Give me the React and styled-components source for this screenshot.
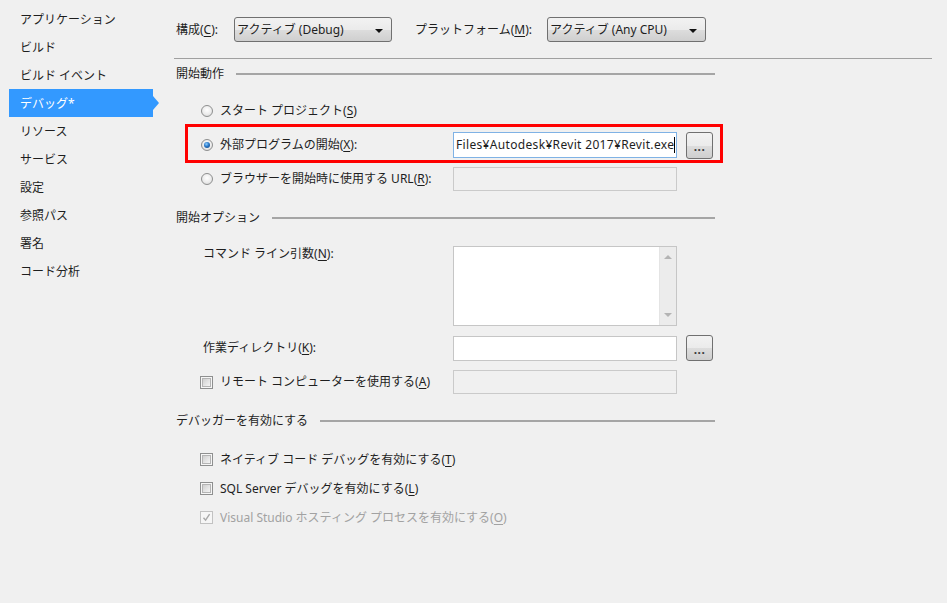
import React from 'react';
import styled, { createGlobalStyle, css } from 'styled-components';

const Global = createGlobalStyle`
  html, body { margin: 0; padding: 0; background: #f0f0f0; }
  body {
    font-family: "Noto Sans", "Noto Sans CJK JP", sans-serif;
    font-size: 12px;
    color: #1e1e1e;
  }
  #root { width: 947px; height: 603px; overflow: hidden; }
  u { text-decoration-thickness: 1px; text-underline-offset: 2px; }
`;

const Page = styled.div`
  display: flex;
  width: 947px;
  height: 603px;
  background: #f0f0f0;
`;

const Sidebar = styled.nav`
  flex: none;
  width: 162px;
  box-sizing: border-box;
  padding: 5px 0 0 9px;
  display: flex;
  flex-direction: column;
`;

const NavItem = styled.div`
  position: relative;
  width: 144px;
  height: 28px;
  box-sizing: border-box;
  padding: 1px 0 0 11px;
  display: flex;
  align-items: center;
  line-height: 16px;
  color: ${p => (p.$active ? '#ffffff' : '#1e1e1e')};
  background: ${p => (p.$active ? '#3399ff' : 'transparent')};
  ${p =>
    p.$active &&
    css`
      &::after {
        content: '';
        position: absolute;
        right: -6px;
        top: 50%;
        transform: translateY(-50%);
        border-left: 6px solid #3399ff;
        border-top: 7px solid transparent;
        border-bottom: 7px solid transparent;
      }
    `}
`;

const Main = styled.main`
  flex: 1;
  box-sizing: border-box;
  padding: 17px 15px 0 14px;
  display: flex;
  flex-direction: column;
`;

const TopRow = styled.div`
  display: flex;
  align-items: center;
  height: 25px;
`;

const FieldLabel = styled.span`
  flex: none;
  width: ${p => p.$w}px;
  line-height: 16px;
  margin-left: ${p => p.$ml || 0}px;
  white-space: nowrap;
`;

const Select = styled.div`
  position: relative;
  flex: none;
  box-sizing: border-box;
  width: ${p => p.$w}px;
  height: 25px;
  border: 1px solid #707070;
  border-radius: 3px;
  background: linear-gradient(#f2f2f2 0%, #ebebeb 50%, #dddddd 51%, #cfcfcf 100%);
  display: flex;
  align-items: center;
  padding-left: 2px;
  line-height: 16px;
  white-space: nowrap;
  &::after {
    content: '';
    position: absolute;
    right: 8px;
    top: 11px;
    border-top: 4px solid #111;
    border-left: 4px solid transparent;
    border-right: 4px solid transparent;
  }
`;

const Divider = styled.div`
  height: 1px;
  margin-top: 16px;
  margin-left: -2px;
  background: #a0a0a0;
`;

const Section = styled.section`
  width: 539px;
  display: flex;
  flex-direction: column;
`;

const SectionHeading = styled.div`
  display: flex;
  align-items: center;
  height: 16px;
  margin-top: ${p => p.$mt}px;
  line-height: 16px;
  &::after {
    content: '';
    flex: 1;
    height: 2px;
    margin-left: 12px;
    background: #a5a5a5;
  }
`;

const FormRow = styled.div`
  position: relative;
  display: grid;
  grid-template-columns: 268px 224px 27px;
  column-gap: 9px;
  align-items: ${p => p.$align || 'center'};
  height: ${p => p.$h}px;
  margin-top: ${p => p.$mt || 0}px;
`;

const RowLabel = styled.label`
  display: flex;
  align-items: center;
  gap: 7px;
  padding-left: ${p => p.$indent}px;
  line-height: 16px;
  white-space: nowrap;
  color: ${p => (p.$disabled ? '#a2a2a2' : '#1e1e1e')};
`;

const Radio = styled.span`
  flex: none;
  width: 12px;
  height: 12px;
  box-sizing: border-box;
  border-radius: 50%;
  border: 1px solid #8e8f8f;
  background: radial-gradient(circle at 50% 40%, #ffffff 0%, #ececec 55%, #cfcfcf 100%);
  display: inline-flex;
  align-items: center;
  justify-content: center;
  &::after {
    content: '';
    display: ${p => (p.$checked ? 'block' : 'none')};
    width: 6px;
    height: 6px;
    border-radius: 50%;
    background: radial-gradient(circle at 40% 35%, #8fd0ff 0%, #2a78c8 45%, #123f75 100%);
  }
`;

const CheckBox = styled.span`
  flex: none;
  width: 13px;
  height: 13px;
  box-sizing: border-box;
  border: 1px solid ${p => (p.$disabled ? '#c2c2c2' : '#8e8f8f')};
  background: #f6f6f6;
  display: inline-flex;
  align-items: center;
  justify-content: center;
  ${p =>
    !p.$disabled &&
    css`
      &::after {
        content: '';
        width: 7px;
        height: 7px;
        border: 1px solid #b4b4b4;
        background: linear-gradient(135deg, #cfcfcf 0%, #e6e6e6 60%, #f4f4f4 100%);
      }
    `}
`;

const TextBox = styled.div`
  box-sizing: border-box;
  height: ${p => p.$h}px;
  border: 1px solid ${p => (p.$focused ? '#7fb2e5' : p.$disabled ? '#cacaca' : '#c6c6c6')};
  background: ${p => (p.$disabled ? '#f0f0f0' : '#ffffff')};
  display: flex;
  align-items: center;
  padding-left: 2px;
  overflow: hidden;
  white-space: nowrap;
  line-height: 16px;
`;

const PathText = styled.span`
  letter-spacing: 0.33px;
`;

const Caret = styled.span`
  flex: none;
  display: inline-block;
  width: 1px;
  height: 16px;
  background: #000;
`;

const TextArea = styled.div`
  box-sizing: border-box;
  height: 80px;
  border: 1px solid #c6c6c6;
  background: #ffffff;
  display: flex;
  justify-content: flex-end;
`;

const ScrollBar = styled.div`
  width: 17px;
  height: 100%;
  box-sizing: border-box;
  border-left: 1px solid #e4e4e4;
  background: #ececec;
  display: flex;
  flex-direction: column;
  justify-content: space-between;
  align-items: center;
  padding: 8px 0;
`;

const ScrollArrow = styled.span`
  width: 0;
  height: 0;
  border-left: 4px solid transparent;
  border-right: 4px solid transparent;
  ${p =>
    p.$up
      ? css`border-bottom: 4px solid #b4b4b4;`
      : css`border-top: 4px solid #b4b4b4;`}
`;

const BrowseButton = styled.button`
  box-sizing: border-box;
  width: 27px;
  height: ${p => p.$h}px;
  padding: 4px 0 0;
  border: 1px solid #707070;
  border-radius: 3px;
  background: linear-gradient(#f2f2f2 0%, #ebebeb 50%, #dddddd 51%, #cfcfcf 100%);
  font-family: "Noto Sans", sans-serif;
  font-size: 12px;
  font-weight: bold;
  color: #3a3a3a;
  letter-spacing: 0.5px;
  line-height: 12px;
`;

const Highlight = styled.div`
  position: absolute;
  top: -4px;
  bottom: -1px;
  left: 9px;
  right: -8px;
  border: 3px solid #ff0000;
  pointer-events: none;
`;

const CheckMark = () => (
  <svg width="9" height="9" viewBox="0 0 9 9">
    <path d="M1.5 4.8 L3.6 7.2 L7.6 1.2" fill="none" stroke="#a8a8a8" strokeWidth="1.4" />
  </svg>
);

const navItems = [
  'アプリケーション',
  'ビルド',
  'ビルド イベント',
  'デバッグ*',
  'リソース',
  'サービス',
  '設定',
  '参照パス',
  '署名',
  'コード分析',
];

export default function App() {
  return (
    <>
      <Global />
      <Page>
        <Sidebar>
          {navItems.map(n => (
            <NavItem key={n} $active={n === 'デバッグ*'}>
              {n}
            </NavItem>
          ))}
        </Sidebar>
        <Main>
          <TopRow>
            <FieldLabel $w={58}>
              構成(<u>C</u>):
            </FieldLabel>
            <Select $w={158}>アクティブ (Debug)</Select>
            <FieldLabel $w={132} $ml={23}>
              プラットフォーム(<u>M</u>):
            </FieldLabel>
            <Select $w={159}>アクティブ (Any CPU)</Select>
          </TopRow>
          <Divider />

          <Section>
            <SectionHeading $mt={7}>開始動作</SectionHeading>
            <FormRow $h={34} $mt={12}>
              <RowLabel $indent={25}>
                <Radio />
                <span>スタート プロジェクト(<u>S</u>)</span>
              </RowLabel>
            </FormRow>
            <FormRow $h={34}>
              <Highlight />
              <RowLabel $indent={25}>
                <Radio $checked />
                <span>外部プログラムの開始(<u>X</u>):</span>
              </RowLabel>
              <TextBox $h={26} $focused>
                <PathText>Files¥Autodesk¥Revit 2017¥Revit.exe</PathText>
                <Caret />
              </TextBox>
              <BrowseButton $h={27}>...</BrowseButton>
            </FormRow>
            <FormRow $h={34}>
              <RowLabel $indent={25}>
                <Radio />
                <span>ブラウザーを開始時に使用する URL(<u>R</u>):</span>
              </RowLabel>
              <TextBox $h={24} $disabled />
            </FormRow>

            <SectionHeading $mt={14}>開始オプション</SectionHeading>
            <FormRow $h={80} $mt={20} $align="start">
              <RowLabel $indent={27}>
                <span>コマンド ライン引数(<u>N</u>):</span>
              </RowLabel>
              <TextArea>
                <ScrollBar>
                  <ScrollArrow $up />
                  <ScrollArrow />
                </ScrollBar>
              </TextArea>
            </FormRow>
            <FormRow $h={26} $mt={9}>
              <RowLabel $indent={27}>
                <span>作業ディレクトリ(<u>K</u>):</span>
              </RowLabel>
              <TextBox $h={25} />
              <BrowseButton $h={26}>...</BrowseButton>
            </FormRow>
            <FormRow $h={24} $mt={9}>
              <RowLabel $indent={24}>
                <CheckBox />
                <span>リモート コンピューターを使用する(<u>A</u>)</span>
              </RowLabel>
              <TextBox $h={24} $disabled />
            </FormRow>

            <SectionHeading $mt={19}>デバッガーを有効にする</SectionHeading>
            <FormRow $h={29} $mt={16}>
              <RowLabel $indent={24}>
                <CheckBox />
                <span>ネイティブ コード デバッグを有効にする(<u>T</u>)</span>
              </RowLabel>
            </FormRow>
            <FormRow $h={29}>
              <RowLabel $indent={24}>
                <CheckBox />
                <span>SQL Server デバッグを有効にする(<u>L</u>)</span>
              </RowLabel>
            </FormRow>
            <FormRow $h={29}>
              <RowLabel $indent={24} $disabled>
                <CheckBox $disabled>
                  <CheckMark />
                </CheckBox>
                <span>Visual Studio ホスティング プロセスを有効にする(<u>O</u>)</span>
              </RowLabel>
            </FormRow>
          </Section>
        </Main>
      </Page>
    </>
  );
}
